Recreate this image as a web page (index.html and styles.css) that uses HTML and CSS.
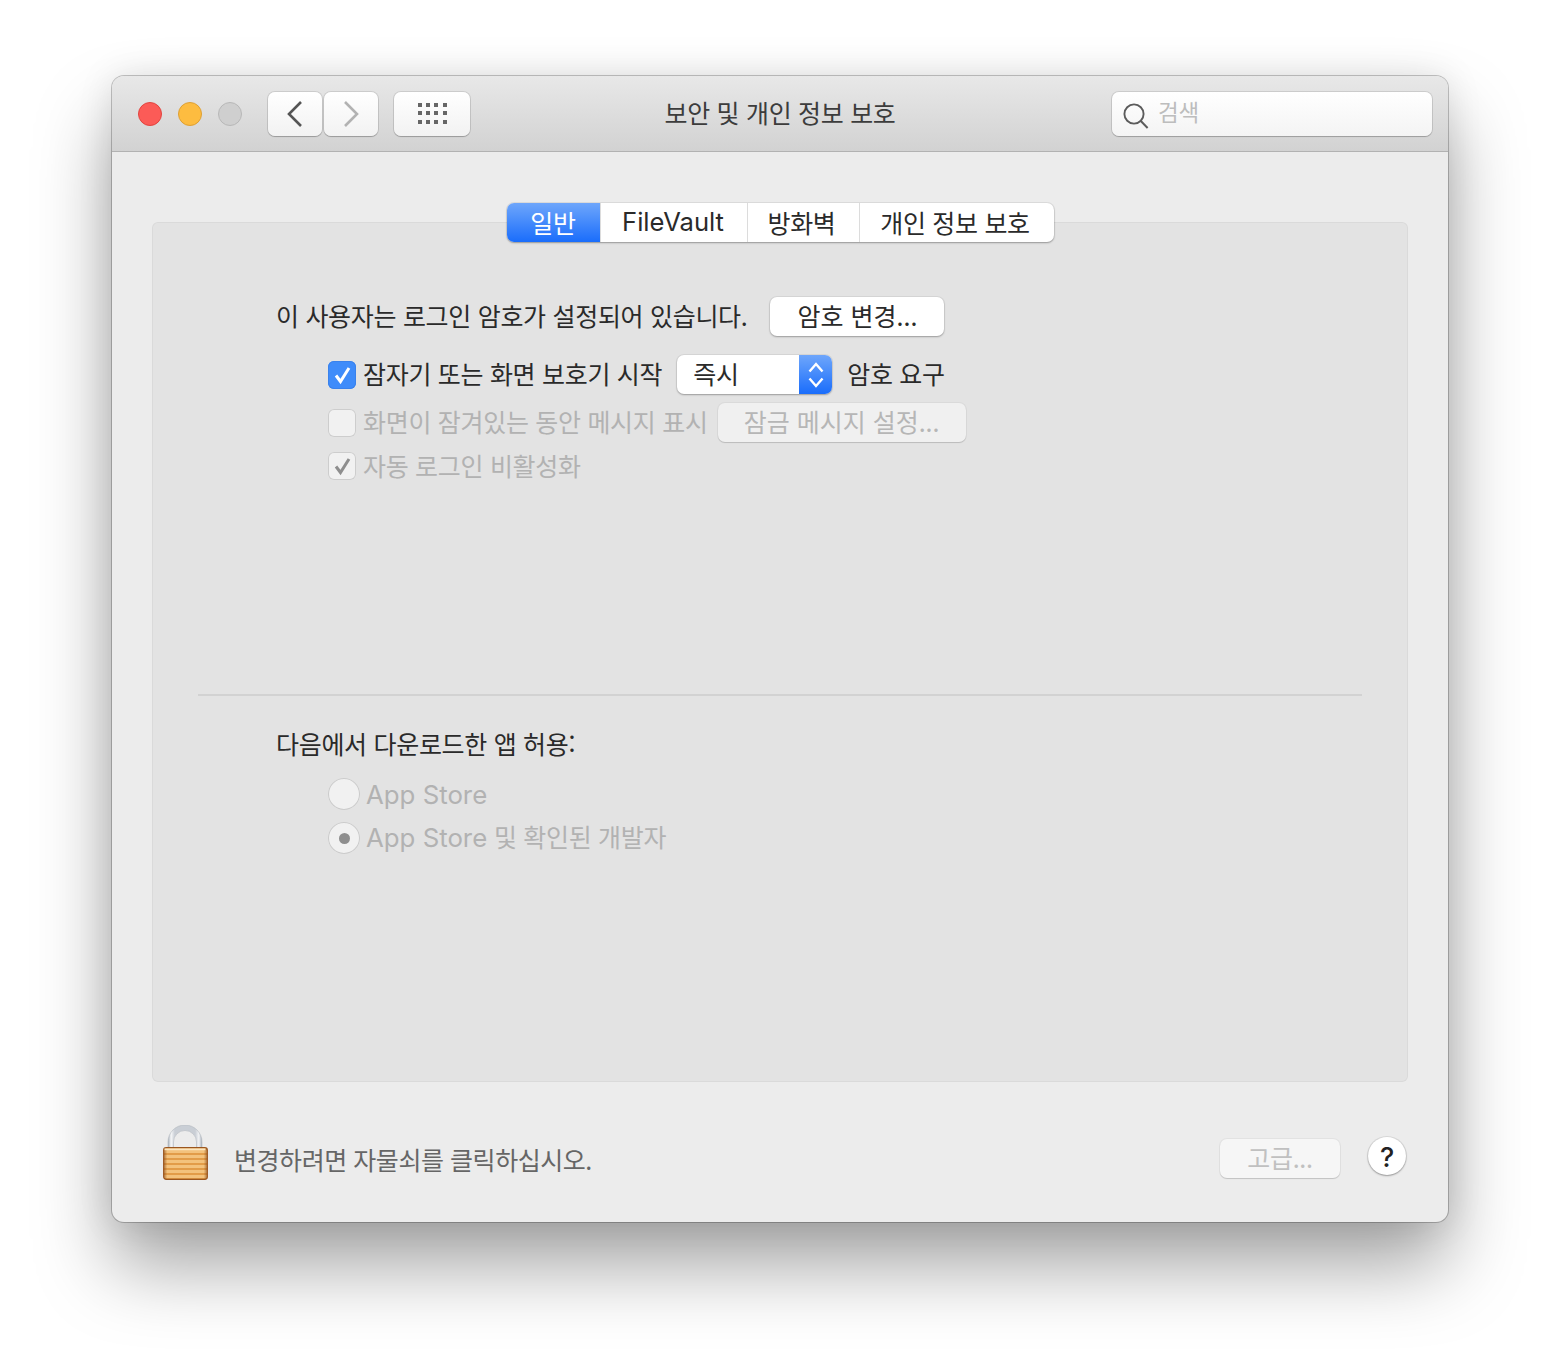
FILE: index.html
```html
<!DOCTYPE html>
<html lang="ko">
<head>
<meta charset="utf-8">
<title>보안 및 개인 정보 보호</title>
<link rel="stylesheet" href="styles.css">
</head>
<body>
<div class="window">
  <header class="titlebar">
    <div class="lights">
      <span class="light red"></span>
      <span class="light yellow"></span>
      <span class="light gray"></span>
    </div>
    <div class="nav">
      <button class="tool navbtn">
        <svg width="16" height="26" viewBox="0 0 16 26"><path d="M14 1 L2 13 L14 25" fill="none" stroke="#555" stroke-width="2.6"/></svg>
      </button>
      <button class="tool navbtn">
        <svg width="16" height="26" viewBox="0 0 16 26"><path d="M2 1 L14 13 L2 25" fill="none" stroke="#b2b2b2" stroke-width="2.6"/></svg>
      </button>
    </div>
    <button class="tool gridbtn">
      <svg width="29" height="21" viewBox="0 0 29 21" fill="#666">
        <rect x="0" y="0" width="4" height="4"/><rect x="8" y="0" width="4" height="4"/><rect x="16" y="0" width="4" height="4"/><rect x="25" y="0" width="4" height="4"/>
        <rect x="0" y="8" width="4" height="4"/><rect x="8" y="8" width="4" height="4"/><rect x="16" y="8" width="4" height="4"/><rect x="25" y="8" width="4" height="4"/>
        <rect x="0" y="17" width="4" height="4"/><rect x="8" y="17" width="4" height="4"/><rect x="16" y="17" width="4" height="4"/><rect x="25" y="17" width="4" height="4"/>
      </svg>
    </button>
    <h1 class="title">보안 및 개인 정보 보호</h1>
    <div class="search">
      <svg width="26" height="26" viewBox="0 0 26 26"><circle cx="11" cy="11" r="9.6" fill="none" stroke="#5c5c5c" stroke-width="1.9"/><path d="M17.6 17.8 L24.6 25" fill="none" stroke="#5c5c5c" stroke-width="2"/></svg>
      <span class="search-text">검색</span>
    </div>
  </header>

  <main class="content">
    <section class="panel">
      <nav class="tabs">
        <span class="tab tab-active">일반</span>
        <span class="tab tab-file">FileVault</span>
        <span class="tab tab-fire">방화벽</span>
        <span class="tab tab-priv">개인 정보 보호</span>
      </nav>

      <div class="upper">
        <div class="row row-pass">
          <span class="label">이 사용자는 로그인 암호가 설정되어 있습니다.</span>
          <button class="btn btn-change">암호 변경...</button>
        </div>
        <div class="row row-sleep">
          <span class="check check-on">
            <svg width="28" height="28" viewBox="0 0 28 28"><path d="M8 14.500 L12.500 20.500 L21 7" fill="none" stroke="#fff" stroke-width="3"/></svg>
          </span>
          <span class="label">잠자기 또는 화면 보호기 시작</span>
          <div class="select">
            <span class="select-value">즉시</span>
            <span class="select-arrows">
              <svg width="16" height="28" viewBox="0 0 16 28"><path d="M1.500 10.500 L8 3 L14.500 10.500 M1.500 17.500 L8 25 L14.500 17.500" fill="none" stroke="#fff" stroke-width="2.400"/></svg>
            </span>
          </div>
          <span class="label">암호 요구</span>
        </div>
        <div class="row row-msg">
          <span class="check"></span>
          <span class="label dim">화면이 잠겨있는 동안 메시지 표시</span>
          <button class="btn btn-dim btn-lock">잠금 메시지 설정...</button>
        </div>
        <div class="row row-auto">
          <span class="check">
            <svg width="28" height="28" viewBox="0 0 28 28"><path d="M8 14.500 L12.500 20.500 L21 7" fill="none" stroke="#8e8e8e" stroke-width="3"/></svg>
          </span>
          <span class="label dim">자동 로그인 비활성화</span>
        </div>
      </div>

      <hr class="divider">

      <div class="lower">
        <div class="row row-allow"><span class="label">다음에서 다운로드한 앱 허용:</span></div>
        <div class="row row-r1">
          <span class="radio"></span>
          <span class="label dim"><span class="latin">App Store</span></span>
        </div>
        <div class="row row-r2">
          <span class="radio radio-on"></span>
          <span class="label dim"><span class="latin">App Store</span> 및 확인된 개발자</span>
        </div>
      </div>
    </section>

    <footer class="footer">
      <svg class="lock" width="46" height="56" viewBox="0 0 46 56">
        <defs>
          <linearGradient id="shackle" x1="0" y1="0" x2="1" y2="0">
            <stop offset="0" stop-color="#a4adb8"/><stop offset="0.09" stop-color="#f6f7f8"/><stop offset="0.2" stop-color="#c9ced5"/>
            <stop offset="0.8" stop-color="#c9ced5"/><stop offset="0.91" stop-color="#f2f3f5"/><stop offset="1" stop-color="#a4adb8"/>
          </linearGradient>
          <pattern id="stripes" width="4" height="5" patternUnits="userSpaceOnUse">
            <rect width="4" height="5" fill="#f3c27c"/>
            <rect y="3" width="4" height="2" fill="#e29c48"/>
          </pattern>
          <linearGradient id="edges" x1="0" y1="0" x2="1" y2="0">
            <stop offset="0" stop-color="#8a4a18" stop-opacity=".55"/><stop offset="0.07" stop-color="#8a4a18" stop-opacity="0"/>
            <stop offset="0.93" stop-color="#8a4a18" stop-opacity="0"/><stop offset="1" stop-color="#8a4a18" stop-opacity=".55"/>
          </linearGradient>
        </defs>
        <path d="M5 24 V17 A17 17 0 0 1 39 17 V24 H33.500 V17 A11.500 11.500 0 0 0 10.500 17 V24 Z" fill="url(#shackle)" stroke="#b4b9c0" stroke-width="0.6"/>
        <rect x="0.700" y="22.700" width="43.600" height="31.600" rx="2.500" fill="url(#stripes)" stroke="#9a561f" stroke-width="1.300"/>
        <rect x="1.300" y="23.300" width="42.400" height="30.400" rx="2" fill="url(#edges)"/>
        <rect x="1.500" y="23.400" width="41" height="1.800" fill="#fbe6c0"/>
      </svg>
      <span class="footer-text">변경하려면 자물쇠를 클릭하십시오.</span>
      <button class="btn btn-adv">고급...</button>
      <button class="help">?</button>
    </footer>
  </main>
</div>
</body>
</html>
```

FILE: styles.css
```css
* { box-sizing: border-box; }

html, body {
  margin: 0;
  height: 1370px;
  background: #fff;
  overflow: hidden;
}

body {
  padding: 76px 112px 0;
  font-family: "Noto Sans CJK KR", "Noto Sans", sans-serif;
  font-size: 25px;
  letter-spacing: -0.3px;
  color: #2a2a2a;
}

button {
  font-family: inherit;
  font-size: inherit;
  padding: 0;
  margin: 0;
}

.window {
  width: 1336px;
  height: 1146px;
  border-radius: 12px;
  background: #ececec;
  box-shadow: 0 0 0 1px rgba(0,0,0,.22), 0 44px 76px rgba(0,0,0,.36), 0 0 36px rgba(0,0,0,.1);
  overflow: hidden;
}

.titlebar {
  position: relative;
  display: flex;
  align-items: center;
  height: 76px;
  padding: 0 16px 0 26px;
  background: linear-gradient(#e8e8e8, #d2d2d2);
  border-bottom: 1px solid #b2b2b2;
}

.lights { display: flex; gap: 16px; margin-right: 26px; }

.light {
  width: 24px;
  height: 24px;
  border-radius: 50%;
  border: 1px solid;
}
.red { background: #fc5b57; border-color: #e2443f; }
.yellow { background: #fdbc40; border-color: #dea034; }
.gray { background: #cfcfcf; border-color: #b8b8b8; }

.tool {
  height: 44px;
  background: linear-gradient(#ffffff, #f2f2f2);
  border: 0;
  border-radius: 7px;
  box-shadow: 0 0 0 1px rgba(0,0,0,.1), 0 1px 1px rgba(0,0,0,.2);
  display: flex;
  align-items: center;
  justify-content: center;
}

.nav { display: flex; gap: 2px; margin-right: 16px; }
.navbtn { width: 54px; }
.gridbtn { width: 76px; }

.title {
  position: absolute;
  left: 0;
  right: 0;
  top: 18px;
  margin: 0;
  text-align: center;
  font-size: 25px;
  line-height: 36px;
  font-weight: 400;
  color: #3c3c3c;
  pointer-events: none;
}

.search {
  margin-left: auto;
  width: 320px;
  height: 44px;
  background: linear-gradient(#ffffff, #f4f4f4);
  border-radius: 7px;
  box-shadow: 0 0 0 1px rgba(0,0,0,.1), 0 1px 1px rgba(0,0,0,.18);
  display: flex;
  align-items: center;
  padding-left: 11px;
  gap: 9px;
}
.search svg { margin-top: 4px; }
.search-text { color: #bdbdbd; font-size: 22.5px; line-height: 36px; margin-top: -5px; }

.content { padding: 70px 40px 0; }

.panel {
  height: 860px;
  background: #e3e3e3;
  border-radius: 6px;
  box-shadow: inset 0 0 0 1px rgba(0,0,0,.04);
  padding-top: 1px;
}

.tabs {
  display: flex;
  width: 547px;
  height: 39px;
  margin: -20px auto 0;
  background: #fff;
  border-radius: 7px;
  box-shadow: 0 0 0 1px rgba(0,0,0,.06), 0 1px 2px rgba(0,0,0,.3);
}

.tab {
  display: flex;
  align-items: center;
  justify-content: center;
  height: 39px;
  line-height: 36px;
  padding: 0 3px 2px 0;
  color: #2a2a2a;
  border-left: 1px solid #dcdcdc;
}
.tab-active {
  width: 93px;
  padding-right: 0;
  border-left: 0;
  color: #fff;
  background: linear-gradient(#6ea6fb, #1a6dfb);
  border-radius: 7px 0 0 7px;
}
.tab-file { width: 147px; padding-right: 1px; font-family: Inter, "Noto Sans", sans-serif; font-size: 25.6px; letter-spacing: 0; }
.tab-fire { width: 112px; }
.tab-priv { width: 195px; }

.upper { height: 452px; padding: 55px 0 0 124px; }

.row { display: flex; align-items: center; }
.label { line-height: 36px; white-space: nowrap; margin-bottom: 4px; }
.dim { color: #b2b2b2; }
.row-auto .label, .row-allow .label, .row-r1 .label { margin-bottom: 2px; }

.row-pass { height: 39px; gap: 23px; }
.row-sleep { height: 39px; margin: 19px 0 0 52px; }
.row-msg { height: 39px; margin: 9px 0 0 52px; }
.row-auto { height: 36px; margin: 6px 0 0 52px; }

.check {
  width: 28px;
  height: 28px;
  flex: none;
  margin-right: 7px;
  border-radius: 6px;
  background: #f1f1f1;
  box-shadow: inset 0 0 0 1px #cdcdcd;
  display: flex;
  align-items: center;
  justify-content: center;
}
.check-on {
  background: #3f8cfa;
  box-shadow: inset 0 0 0 1px #3a82ec;
}

.btn {
  height: 39px;
  padding-bottom: 4px;
  border: 0;
  border-radius: 7px;
  background: #fff;
  color: #2a2a2a;
  letter-spacing: 0;
  box-shadow: 0 0 0 1px rgba(0,0,0,.05), 0 1px 2px rgba(0,0,0,.28);
  line-height: 36px;
  white-space: nowrap;
}
.btn-change { width: 174px; }
.btn-dim, .btn-adv {
  color: #b6b6b6;
  background: #f0f0f0;
  box-shadow: 0 0 0 1px rgba(0,0,0,.04), 0 1px 1px rgba(0,0,0,.14);
}
.btn-lock { width: 248px; margin-left: 10px; }
.btn-adv {
  width: 120px;
  margin-left: auto;
  padding-bottom: 2px;
  letter-spacing: -0.3px;
  background: #f6f6f6;
  color: #c0c0c0;
}

.select {
  display: flex;
  width: 155px;
  height: 39px;
  margin: 0 15px;
  background: #fff;
  border-radius: 7px;
  box-shadow: 0 0 0 1px rgba(0,0,0,.05), 0 1px 2px rgba(0,0,0,.28);
  overflow: hidden;
}
.select-value { flex: 1; padding-left: 16px; line-height: 36px; }
.select-arrows {
  width: 33px;
  background: linear-gradient(#6ea6fb, #1a6dfb);
  display: flex;
  align-items: center;
  justify-content: center;
}

.divider {
  margin: 0 46px;
  height: 2px;
  border: 0;
  background: #d2d2d2;
}

.lower { padding: 30px 0 0 124px; }
.row-allow { height: 36px; }
.row-r1 { height: 36px; margin: 15px 0 0 52px; }
.row-r2 { height: 36px; margin: 8px 0 0 52px; }

.latin { font-family: Inter, "Noto Sans", sans-serif; font-size: 25.8px; letter-spacing: 0; }

.radio {
  width: 32px;
  height: 32px;
  flex: none;
  margin: 0 6px 2px 0;
  border-radius: 50%;
  background: #f1f1f1;
  box-shadow: inset 0 0 0 1px #cbcbcb;
  display: flex;
  align-items: center;
  justify-content: center;
}
.radio-on::after {
  content: "";
  width: 11px;
  height: 11px;
  border-radius: 50%;
  background: #8e8e8e;
}

.footer {
  display: flex;
  align-items: center;
  height: 60px;
  margin-top: 46px;
}
.lock { flex: none; margin: 0 25px 10px 11px; }
.footer-text { color: #666; line-height: 36px; margin-top: 2px; letter-spacing: -0.45px; }
.help {
  width: 38px;
  height: 38px;
  margin: 0 2px 4px 28px;
  padding-top: 3px;
  border: 0;
  border-radius: 50%;
  background: #fff;
  color: #222;
  font-family: Inter, "Liberation Sans", sans-serif;
  font-size: 27px;
  font-weight: 500;
  line-height: 36px;
  box-shadow: 0 0 0 1px rgba(0,0,0,.08), 0 1px 2px rgba(0,0,0,.3);
}
```
